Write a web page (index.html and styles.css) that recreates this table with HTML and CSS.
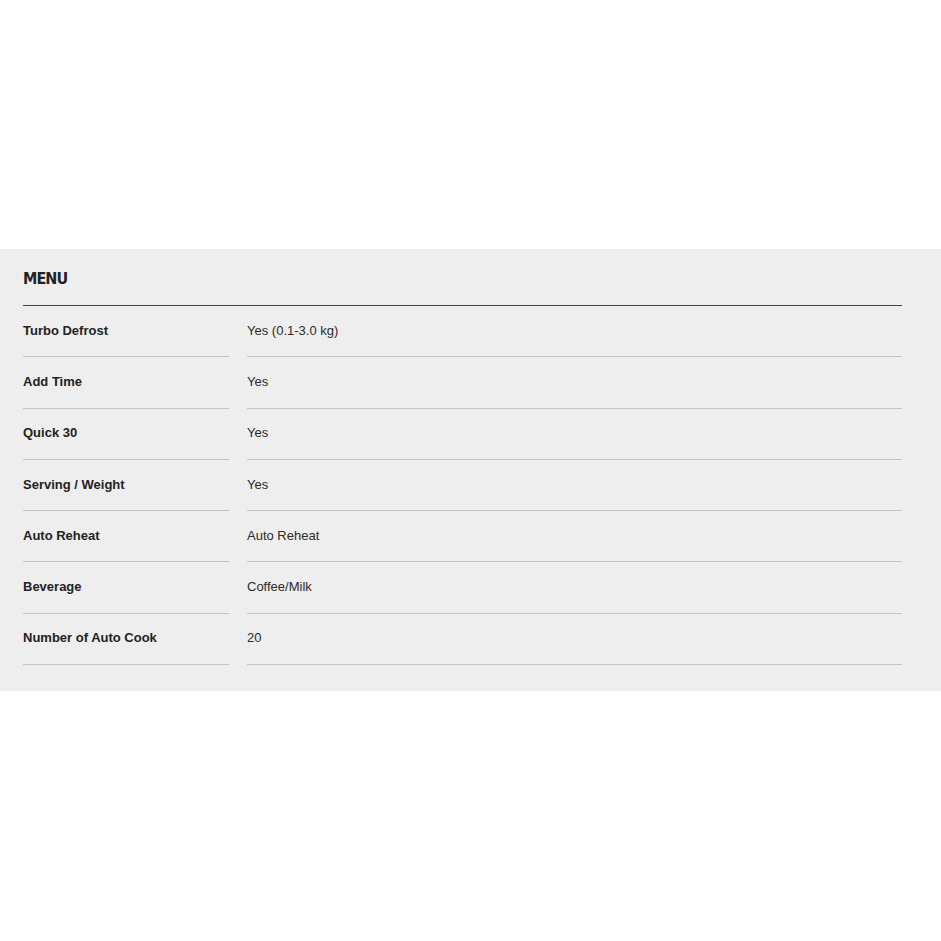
FILE: index.html
```html
<!DOCTYPE html>
<html>
<head>
<meta charset="utf-8">
<link rel="stylesheet" href="styles.css">
</head>
<body>
<div class="top-space"></div>
<section class="spec">
  <h2 class="spec-title">MENU</h2>
  <div class="spec-table">
    <div class="row"><div class="label">Turbo Defrost</div><div class="value">Yes (0.1-3.0 kg)</div></div>
    <div class="row"><div class="label">Add Time</div><div class="value">Yes</div></div>
    <div class="row"><div class="label">Quick 30</div><div class="value">Yes</div></div>
    <div class="row"><div class="label">Serving / Weight</div><div class="value">Yes</div></div>
    <div class="row"><div class="label">Auto Reheat</div><div class="value">Auto Reheat</div></div>
    <div class="row"><div class="label">Beverage</div><div class="value">Coffee/Milk</div></div>
    <div class="row"><div class="label">Number of Auto Cook</div><div class="value">20</div></div>
  </div>
</section>
</body>
</html>
```
FILE: styles.css
```css
html, body {
  margin: 0;
  padding: 0;
  background: #ffffff;
}
body {
  font-family: "Liberation Sans", Arial, sans-serif;
  color: #222;
}
.top-space {
  height: 249px;
}
.spec {
  background: #eeeeee;
  padding: 0 39px 26px 23px;
}
.spec-title {
  margin: 0;
  height: 57px;
  display: flex;
  align-items: center;
  font-family: "DejaVu Sans Condensed", "DejaVu Sans", sans-serif;
  font-stretch: condensed;
  font-weight: bold;
  font-size: 16px;
  letter-spacing: -0.9px;
  color: #222;
  padding-top: 2px;
  box-sizing: border-box;
  border-bottom: 1px solid #444;
}
.spec-table {
  display: flex;
  flex-direction: column;
}
.row {
  display: grid;
  grid-template-columns: 206px 1fr;
  column-gap: 18px;
  height: 51.3px;
}
.label, .value {
  display: flex;
  align-items: center;
  border-bottom: 1px solid #c4c4c4;
  font-size: 13px;
  padding-bottom: 2px;
}
.label {
  font-weight: bold;
  color: #222;
}
.value {
  color: #2a2a2a;
}
```
